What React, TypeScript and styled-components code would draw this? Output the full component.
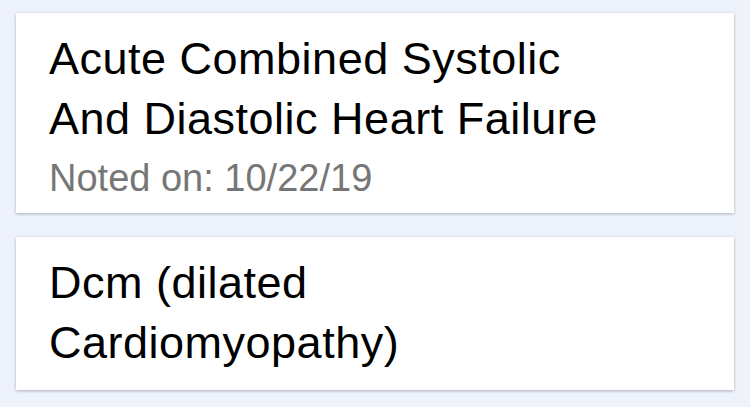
import React from 'react';
import styled, { createGlobalStyle } from 'styled-components';

const GlobalStyle = createGlobalStyle`
  html, body {
    margin: 0;
    padding: 0;
    background-color: #eef2fb;
  }
  body {
    font-family: "Liberation Sans", Arial, sans-serif;
  }
`;

const List = styled.div`
  padding: 13px 16px;
  display: flex;
  flex-direction: column;
  gap: 24px;
`;

const Card = styled.div`
  background-color: #ffffff;
  padding: 16px 33px 17px;
  box-shadow: 0 1px 3px rgba(0, 0, 0, 0.28);
`;

const Title = styled.div`
  max-width: 600px;
  font-size: 45px;
  line-height: 60px;
  letter-spacing: 0.5px;
  color: #000000;
`;

const Noted = styled.div`
  margin-top: 11px;
  font-size: 38px;
  line-height: 36px;
  color: #767676;
`;

type Condition = {
  name: string;
  notedOn?: string;
};

const conditions: Condition[] = [
  { name: 'Acute Combined Systolic And Diastolic Heart Failure', notedOn: '10/22/19' },
  { name: 'Dcm (dilated Cardiomyopathy)' },
];

const App = () => (
  <>
    <GlobalStyle />
    <List>
      {conditions.map((c) => (
        <Card key={c.name}>
          <Title>{c.name}</Title>
          {c.notedOn && <Noted>Noted on: {c.notedOn}</Noted>}
        </Card>
      ))}
    </List>
  </>
);

export default App;
